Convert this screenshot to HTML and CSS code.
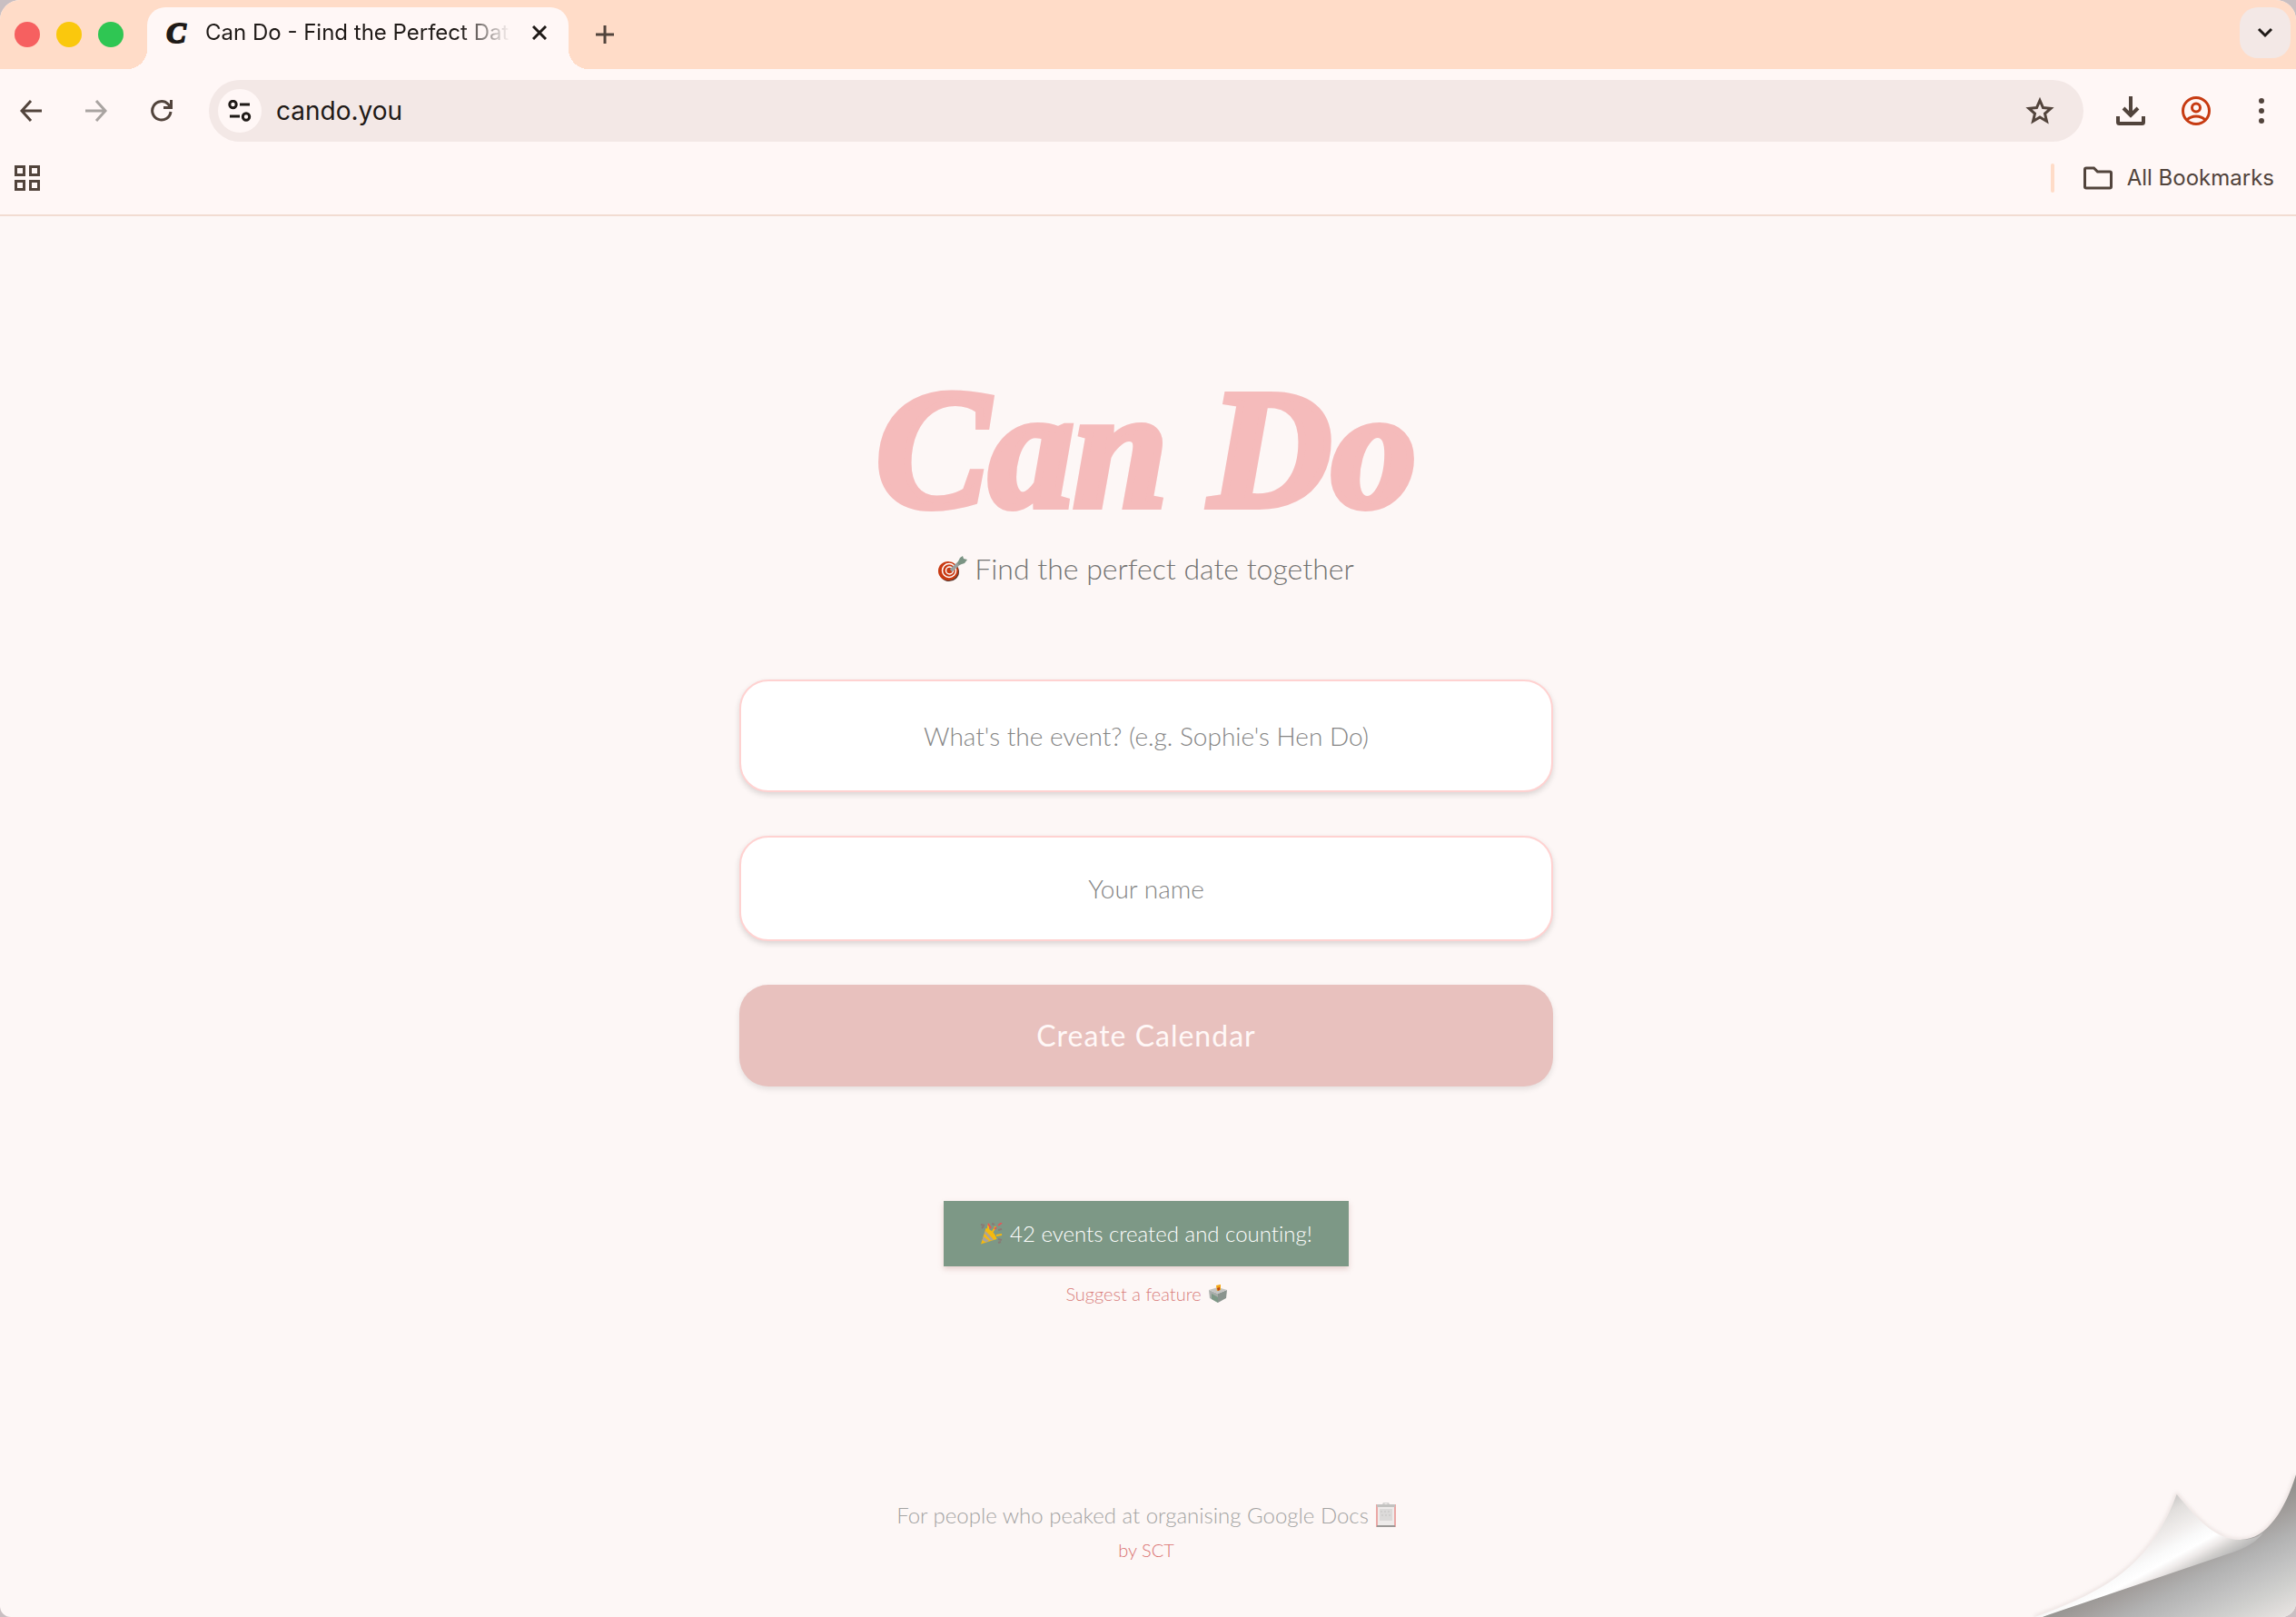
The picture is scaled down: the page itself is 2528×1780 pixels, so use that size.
FILE: index.html
```html
<!DOCTYPE html>
<html lang="en">
<head>
    <meta charset="UTF-8">
    <meta name="viewport" content="width=device-width, initial-scale=1.0">
    <title>Can Do - Find the Perfect Date</title>
    <link rel="stylesheet" href="styles.css">
</head>
<body>

<div class="window">
    <!-- Tab strip -->
    <div class="tab-strip">
        <div class="lights">
            <button type="button" class="light red" aria-label="Close window"></button>
            <button type="button" class="light yellow" aria-label="Minimise window"></button>
            <button type="button" class="light green" aria-label="Zoom window"></button>
        </div>
        <div class="tab">
            <span class="favicon" aria-hidden="true">C</span>
            <span class="tab-title">Can Do - Find the Perfect Date</span>
            <button type="button" class="icon-button" aria-label="Close tab">
                <svg width="16" height="16" viewBox="0 0 16 16" fill="none" stroke="#1f1a17" stroke-width="3"><path d="M1 1l14 14M15 1L1 15"/></svg>
            </button>
        </div>
        <button type="button" class="icon-button new-tab" aria-label="New tab">
            <svg width="20" height="20" viewBox="0 0 20 20" fill="none" stroke="#52443c" stroke-width="3"><path d="M10 0v20M0 10h20"/></svg>
        </button>
        <button type="button" class="icon-button tab-search" aria-label="Search tabs">
            <svg width="18" height="12" viewBox="0 0 18 12" fill="none" stroke="#1f1a17" stroke-width="3"><path d="M2 2l7 7 7-7"/></svg>
        </button>
    </div>

    <!-- Toolbar -->
    <div class="toolbar">
        <div class="nav">
            <button type="button" class="icon-button" aria-label="Back">
                <svg width="24" height="24" viewBox="0 0 24 24" fill="none" stroke="#52443c" stroke-width="3"><path d="M24 12H2M12 1L2 12l10 11"/></svg>
            </button>
            <button type="button" class="icon-button" aria-label="Forward">
                <svg width="24" height="24" viewBox="0 0 24 24" fill="none" stroke="#a9a4a1" stroke-width="3"><path d="M0 12h22M12 1l10 11-10 11"/></svg>
            </button>
            <button type="button" class="icon-button" aria-label="Reload">
                <svg width="24" height="24" viewBox="0 0 24 24" fill="none" stroke="#52443c" stroke-width="3"><path d="M22 13a10.2 10.2 0 1 1-3-8.500l3 3.500M22.500 0v8.500H14"/></svg>
            </button>
        </div>
        <div class="omnibox">
            <button type="button" class="icon-button site-info" aria-label="View site information">
                <svg width="26" height="24" viewBox="0 0 26 24" fill="none" stroke="#1f1a17" stroke-width="3"><circle cx="5.500" cy="5" r="3.700"/><path d="M13 5h11M2 18h11"/><circle cx="20" cy="18.500" r="3.700"/></svg>
            </button>
            <input type="text" class="url" value="cando.you" aria-label="Address">
            <button type="button" class="icon-button" aria-label="Bookmark this page">
                <svg width="32" height="32" viewBox="0 0 32 32" fill="none" stroke="#52443c" stroke-width="3"><path d="M16 4.500l3.500 8 8.500.8-6.500 5.700 2 8.500-7.500-4.500-7.500 4.500 2-8.500L4 13.300l8.500-.8z"/></svg>
            </button>
        </div>
        <div class="tools">
            <button type="button" class="icon-button" aria-label="Downloads">
                <svg width="32" height="32" viewBox="0 0 32 32" fill="none" stroke="#52443c" stroke-width="4"><path d="M16 0v21M8 13l8 8 8-8M2 22v6.500a1.500 1.500 0 0 0 1.500 1.500h25a1.500 1.500 0 0 0 1.500-1.500V22"/></svg>
            </button>
            <button type="button" class="icon-button" aria-label="Profile">
                <svg width="32" height="32" viewBox="0 0 32 32" fill="none" stroke="#c73b12" stroke-width="3"><circle cx="16" cy="16" r="14.500"/><circle cx="16" cy="12.500" r="4.500"/><path d="M6 26c5-5.500 15-5.500 20 0"/></svg>
            </button>
            <button type="button" class="icon-button" aria-label="Menu">
                <svg width="32" height="32" viewBox="0 0 32 32" fill="#52443c"><circle cx="16" cy="5" r="3"/><circle cx="16" cy="16" r="3"/><circle cx="16" cy="27" r="3"/></svg>
            </button>
        </div>
    </div>

    <!-- Bookmarks bar -->
    <div class="bookmarks">
        <button type="button" class="icon-button" aria-label="Apps">
            <svg width="28" height="28" viewBox="0 0 28 28" fill="none" stroke="#52443c" stroke-width="3"><path d="M1.500 1.500h9v9h-9zM17.500 1.500h9v9h-9zM1.500 17.500h9v9h-9zM17.500 17.500h9v9h-9z"/></svg>
        </button>
        <span class="divider"></span>
        <button type="button" class="icon-button all-bookmarks">
            <svg width="32" height="26" viewBox="0 0 32 26" fill="none" stroke="#52443c" stroke-width="3"><path d="M3 2h8.500l4 4H29a1.500 1.500 0 0 1 1.500 1.500v15A1.500 1.500 0 0 1 29 24H3a1.500 1.500 0 0 1-1.500-1.500v-19A1.500 1.500 0 0 1 3 2z"/></svg>
            All Bookmarks
        </button>
    </div>

    <main class="page">
        <h1 class="logo">Can Do</h1>
        <p class="tagline">
            <!-- dart in target -->
            <svg width="32" height="28" viewBox="0 0 32 28" aria-hidden="true">
                <ellipse cx="12" cy="17.500" rx="11" ry="10.500" fill="#5d3a30"/>
                <ellipse cx="11" cy="16.500" rx="11" ry="10.500" fill="#c93a12"/>
                <ellipse cx="12" cy="16" rx="7.500" ry="7.500" fill="none" stroke="#fff" stroke-width="1.500"/>
                <ellipse cx="12.500" cy="16" rx="4" ry="4" fill="none" stroke="#fff" stroke-width="1.500"/>
                <path d="M14 16L24 7" stroke="#9aa09f" stroke-width="4"/>
                <path d="M21 8l3-6 3-2 1 3 4 1-3 4-6 2z" fill="#7b9484"/>
            </svg>
            Find the perfect date together
        </p>

        <form class="event-form">
            <input type="text" class="field event-name" placeholder="What's the event? (e.g. Sophie's Hen Do)" aria-label="Event name">
            <input type="text" class="field" placeholder="Your name" aria-label="Your name">
            <button type="button" class="create">Create Calendar</button>
        </form>

        <p class="counter">
            <!-- party popper -->
            <svg width="25" height="24" viewBox="0 0 25 24" aria-hidden="true">
                <path d="M1 23.500L6.500 6C12 7 17 12 18.500 18z" fill="#f5b90f"/>
                <path d="M4 15l6 5-3.500 1.500L2.500 19zM6 9l9 9.500-3 1L5 12z" fill="#aaa39c"/>
                <path d="M10 9c-2-3-1-5 0-8M13 12c1-4 3-4 4-8M18 14l6-1" stroke="#f5b90f" stroke-width="2" fill="none"/>
                <path d="M9 1l3 5M20 3l4-3M16 7l2-2" stroke="#e0585b" stroke-width="2"/>
                <path d="M1 2l4 1M2 6l2-2M13 1l3 1M20 8l4-1M20 18l4 1M20 22l3-1" stroke="#8a7a75" stroke-width="2"/>
            </svg>
            42 events created and counting!
        </p>
        <a href="#" class="suggest">
            Suggest a feature
            <!-- ballot box -->
            <svg width="20" height="20" viewBox="0 0 20 20" aria-hidden="true">
                <path d="M0 6l10 4v10L1 15z" fill="#a9adaa"/>
                <path d="M20 6l-10 4v10l9-5z" fill="#8a948e"/>
                <path d="M3 10l7 4v6l-7-4z" fill="#7d9886"/>
                <path d="M0 6l10-3 10 3-10 4z" fill="#c4c4c2"/>
                <path d="M8 1l5-1v6l-4 1z" fill="#f3a515"/>
                <path d="M9 4l3-1v3l-2 1z" fill="#b8441c"/>
            </svg>
        </a>

        <footer class="footer">
            <p class="motto">
                For people who peaked at organising Google Docs
                <!-- notepad -->
                <svg width="22" height="28" viewBox="0 0 22 28" aria-hidden="true">
                    <path d="M8 3a3 3 0 0 1 6 0" fill="none" stroke="#d4d2d1" stroke-width="2"/>
                    <path d="M1 3h20v23H1z" fill="#eeebea" stroke="#eba8a6" stroke-width="2"/>
                    <path d="M4 7h14v13H4z" fill="#dcdad9"/>
                    <path d="M1 3.500h20" stroke="#c3c2c0" stroke-width="3"/>
                    <path d="M1 26h20" stroke="#9c9997" stroke-width="2"/>
                    <path d="M5 10h12M6 14h10" stroke="#c4c2c1" stroke-width="1" stroke-dasharray="2 2"/>
                </svg>
            </p>
            <a href="#" class="author">by SCT</a>
        </footer>
    </main>

    <!-- Page curl in the corner -->
    <svg class="curl" width="308" height="180" viewBox="0 0 924 540" aria-hidden="true">
        <defs>
            <linearGradient id="under" gradientUnits="userSpaceOnUse" x1="224" y1="448" x2="396" y2="792">
                <stop offset="0" stop-color="#91908d"/>
                <stop offset="0.180" stop-color="#a29e9c"/>
                <stop offset="0.370" stop-color="#b2b2b2"/>
                <stop offset="0.560" stop-color="#c1c1c1"/>
                <stop offset="0.750" stop-color="#d0d0ce"/>
                <stop offset="1" stop-color="#e8e4e2"/>
            </linearGradient>
            <linearGradient id="paper" gradientUnits="userSpaceOnUse" x1="180" y1="327" x2="308" y2="560">
                <stop offset="0" stop-color="#cbc9c7"/>
                <stop offset="0.150" stop-color="#e1dedc"/>
                <stop offset="0.400" stop-color="#f1eeed"/>
                <stop offset="0.550" stop-color="#fafafa"/>
                <stop offset="0.670" stop-color="#fff"/>
                <stop offset="0.770" stop-color="#eeeae9"/>
                <stop offset="0.870" stop-color="#d2d0ce"/>
                <stop offset="1" stop-color="#b4b4b4"/>
            </linearGradient>
            <filter id="soft" x="-10%" y="-10%" width="120%" height="120%"><feGaussianBlur stdDeviation="6"/></filter>
        </defs>
        <path d="M60 540C280 460 440 380 530 135C590 205 650 285 740 285C830 285 890 180 924 70" fill="none" stroke="#b9a9a6" stroke-opacity="0.500" stroke-width="6" filter="url(#soft)"/>
        <path d="M85 540L640 300L740 285C830 285 890 180 924 70V540z" fill="url(#under)"/>
        <path d="M60 540C280 460 440 380 530 135C590 205 650 285 740 285Q790 285 815 262Q790 300 720 325L85 540z" fill="url(#paper)"/>
    </svg>
</div>

</body>
</html>
```
FILE: styles.css
```css
* {
    box-sizing: border-box;
}
body {
    margin: 0;
    background: #c9bfc2;
    font-family: Inter, "Liberation Sans", sans-serif;
    color: #1f1a17;
}
p, h1 {
    margin: 0;
}
button {
    border: none;
    padding: 0;
    font-family: inherit;
    cursor: pointer;
}
.window {
    position: relative;
    display: flex;
    flex-direction: column;
    min-height: 100vh;
    background: #fdf7f6;
    border-radius: 22px 22px 16px 12px;
    overflow: hidden;
}
.icon-button {
    display: flex;
    justify-content: center;
    align-items: center;
    background: none;
}

/* Tab strip */
.tab-strip {
    display: flex;
    align-items: center;
    height: 76px;
    padding: 0 6px 0 16px;
    background: #ffdcc8;
}
.lights {
    display: flex;
    gap: 18px;
}
.light {
    width: 28px;
    height: 28px;
    border-radius: 50%;
}
.red {
    background: #f66060;
}
.yellow {
    background: #fac80d;
}
.green {
    background: #2fc653;
}
.tab {
    position: relative;
    display: flex;
    align-items: center;
    align-self: flex-end;
    width: 464px;
    height: 68px;
    margin-left: 26px;
    padding: 0 24px 12px 18px;
    background: #fff7f6;
    border-radius: 20px 20px 0 0;
}
.tab::before,
.tab::after {
    content: "";
    position: absolute;
    bottom: 0;
    width: 22px;
    height: 22px;
}
.tab::before {
    left: -22px;
    background: radial-gradient(circle at 0 0, #ffdcc8 22px, #fff7f6 22px);
}
.tab::after {
    right: -22px;
    background: radial-gradient(circle at 100% 0, #ffdcc8 22px, #fff7f6 22px);
}
.favicon {
    width: 28px;
    font: italic bold 32px/40px "Liberation Serif", serif;
    -webkit-text-stroke: 2px #1f1a17;
    text-align: center;
}
.tab-title {
    flex: 1;
    margin: 0 24px 0 18px;
    font-size: 24px;
    line-height: 32px;
    white-space: nowrap;
    overflow: hidden;
    -webkit-mask-image: linear-gradient(to left, transparent, #000 56px);
    mask-image: linear-gradient(to left, transparent, #000 56px);
}
.new-tab {
    margin-left: 30px;
}
.tab-search {
    width: 56px;
    height: 56px;
    margin: 0 0 4px auto;
    background: #f3e8e6;
    border-radius: 20px;
}

/* Toolbar */
.toolbar {
    display: flex;
    align-items: center;
    gap: 36px;
    padding: 12px 22px 12px 22px;
    background: #fff7f6;
}
.nav {
    display: flex;
    gap: 48px;
}
.omnibox {
    display: flex;
    flex: 1;
    align-items: center;
    height: 68px;
    margin-left: 4px;
    padding: 0 32px 0 10px;
    background: #f3e8e6;
    border-radius: 34px;
}
.site-info {
    width: 48px;
    height: 48px;
    background: #fff7f6;
    border-radius: 50%;
}
.url {
    flex: 1;
    padding: 0 16px;
    border: none;
    outline: none;
    background: none;
    color: #1f1a17;
    font-family: inherit;
    font-size: 28px;
}
.tools {
    display: flex;
    gap: 40px;
}

/* Bookmarks bar */
.bookmarks {
    display: flex;
    align-items: center;
    padding: 12px 24px 24px 16px;
    background: #fff7f6;
    border-bottom: 2px solid #f2dcd2;
}
.divider {
    width: 4px;
    height: 32px;
    margin: 0 32px 0 auto;
    background: #ffdcc8;
    border-radius: 2px;
}
.all-bookmarks {
    gap: 16px;
    color: #52443c;
    font-size: 24px;
    line-height: 32px;
}

/* Page */
.page {
    display: flex;
    flex: 1;
    flex-direction: column;
    align-items: center;
    padding: 150px 24px 60px 20px;
    font-family: Lato, "Open Sans", sans-serif;
    font-weight: 300;
    font-variant-ligatures: none;
}
.logo {
    font: italic bold 186px/212px "Liberation Serif", serif;
    color: #f5bbbb;
    -webkit-text-stroke: 8px #f5bbbb;
    text-shadow: -3px 1px 0 #e9aaa8;
}
.tagline {
    display: flex;
    align-items: center;
    gap: 8px;
    margin-top: 6px;
    color: #737372;
    font-size: 32px;
    line-height: 40px;
}
.event-form {
    display: flex;
    flex-direction: column;
    gap: 48px;
    width: 100%;
    max-width: 896px;
    margin-top: 102px;
}
.field {
    padding: 38px 32px;
    border: 2px solid #ffd2d1;
    border-radius: 32px;
    background: #fff;
    box-shadow: 0 3px 6px rgba(0, 0, 0, 0.14);
    font-family: inherit;
    font-size: 28px;
    font-weight: 300;
    line-height: 36px;
    text-align: center;
}
.event-name {
    padding: 42px 32px;
}
.field::placeholder {
    color: #858585;
    opacity: 1;
}
.create {
    padding: 36px 32px;
    border-radius: 32px;
    background: #e8c1be;
    box-shadow: 0 3px 6px rgba(0, 0, 0, 0.1);
    color: #fff8f7;
    font-size: 32px;
    font-weight: 400;
    letter-spacing: 1px;
    line-height: 40px;
}
.counter {
    display: flex;
    align-items: center;
    gap: 8px;
    margin-top: 126px;
    padding: 20px 40px;
    background: #7d9886;
    box-shadow: 0 3px 6px rgba(180, 120, 115, 0.3);
    color: #fff;
    font-size: 24px;
    line-height: 32px;
}
.suggest {
    display: flex;
    align-items: center;
    gap: 8px;
    margin-top: 18px;
    color: #d97f7d;
    font-size: 20px;
    line-height: 24px;
    text-decoration: none;
}
.footer {
    display: flex;
    flex-direction: column;
    align-items: center;
    gap: 8px;
    margin-top: auto;
}
.motto {
    display: flex;
    align-items: center;
    gap: 8px;
    color: #a3a3a2;
    font-size: 24px;
    line-height: 32px;
}
.author {
    color: #d97271;
    font-size: 20px;
    line-height: 28px;
    text-decoration: none;
}
.curl {
    position: absolute;
    right: 0;
    bottom: 0;
}
```
